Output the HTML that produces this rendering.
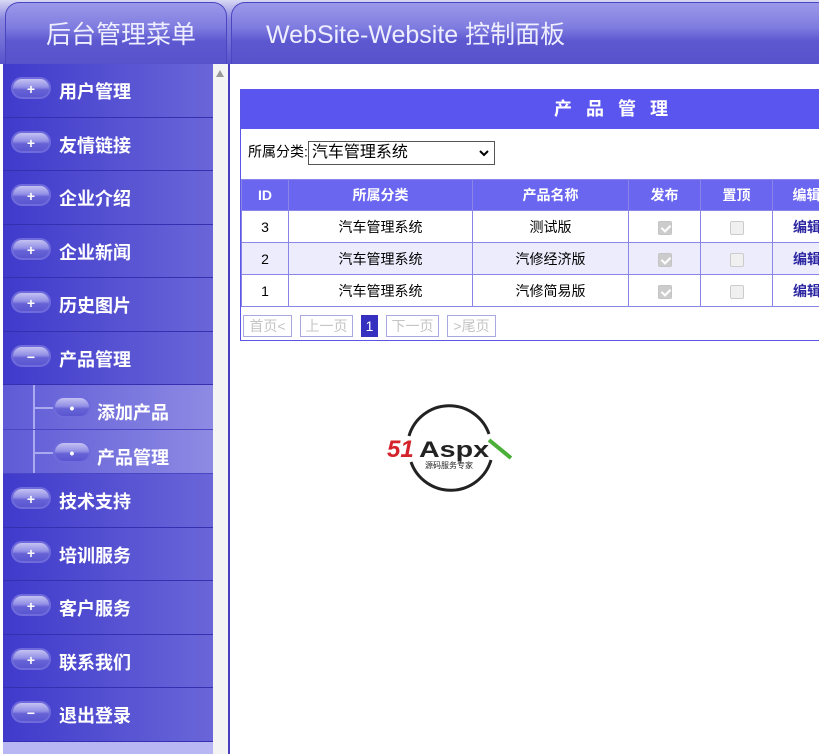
<!DOCTYPE html>
<html><head><meta charset="utf-8"><style>
*{margin:0;padding:0;box-sizing:border-box}
body{width:819px;height:754px;overflow:hidden;background:#fff;font-family:"Liberation Sans","Noto Sans CJK SC",sans-serif;position:relative}
.hdr{position:absolute;left:0;top:0;width:819px;height:64px;background:linear-gradient(#d8d8f4 0%,#8a87e0 30%,#5853cc 100%)}
.tab{position:absolute;top:2px;height:62px;border-radius:14px 14px 0 0;background:linear-gradient(#9c99ea 0%,#7f7ce0 40%,#5d58d0 62%,#5853cc 100%);border:1px solid #4a45c0;border-bottom:none}
.tab span{position:absolute;top:12px;color:#eef;font-size:25px}
.side{position:absolute;left:3px;top:64px;width:210px;height:690px;background:#5550d0}
.it{position:absolute;left:0;width:210px;background:linear-gradient(90deg,#3f3acb,#5d59d4 70%,#6a66d8);border-bottom:1px solid #3430b0}
.it b{position:absolute;left:56px;color:#fff;font-size:18px;font-weight:bold}
.pill{position:absolute;left:8px;width:40px;height:22px;border-radius:11px;background:linear-gradient(#c4c2f2,#9390e6 45%,#6662d6 60%,#5a56d0);border:2px solid #6f6bdc}
.pill i{position:absolute;left:0;right:0;top:3px;text-align:center;color:#fff;font-style:normal;font-size:14px;line-height:14px;font-weight:bold}
.sub{position:absolute;left:0;width:210px;background:linear-gradient(90deg,#5f5bd6,#7a77de 60%,#8e8be4);border-bottom:1px solid #4a46c4}
.sub b{position:absolute;left:94px;color:#fff;font-size:18px;font-weight:bold}
.sub .pill{left:50px;width:38px}
.vl{position:absolute;left:30px;top:0;width:2px;height:100%;background:#aaa8ee}
.hl{position:absolute;left:30px;width:20px;height:2px;background:#aaa8ee}
.sb{position:absolute;left:213px;top:64px;width:15px;height:690px;background:#f4f4f4}
.vline{position:absolute;left:228px;top:64px;width:2px;height:690px;background:#4a3fbf}
.tb{position:absolute;left:240px;top:89px;width:600px;height:252px;border:1px solid #5b55e8;font-size:14px}
.t1{height:39px;background:#5b55f0;color:#fff;font-weight:bold;font-size:18px;line-height:39px;letter-spacing:14px;position:relative}
.t1 span{position:absolute;left:313px}
.t2{height:50px;padding:12px 0 0 7px;font-size:14px}
.sel{display:inline-block;width:187px;height:24px;border:1px solid #555;font-size:16px;line-height:22px;padding-left:3px;vertical-align:middle;position:relative}
table{border-collapse:collapse;width:600px}
td,th{border:1px solid #8a86e8;text-align:center;height:32px;font-size:14px}
th{background:#6a66f0;color:#fff;height:31px}
tr.a td{background:#ececfc}
.cb{display:inline-block;width:14px;height:14px;border:1px solid #ccc;border-radius:2px;background:#f0f0f0;vertical-align:middle;position:relative}
.cb.c{background:#ccc;border-color:#c4c4c4}
.cb.c:after{content:"";position:absolute;left:4px;top:1px;width:4px;height:7px;border:solid #fff;border-width:0 2px 2px 0;transform:rotate(45deg)}
.ed{color:#2a24a0;font-weight:bold;text-align:left;padding-left:20px}
.pg{position:relative;height:34px;font-size:14px}
.pg span{position:absolute;top:8px;border:1px solid #aaa8e0;color:#c4c4c4;height:22px;line-height:20px;text-align:center}
</style></head><body>
<div class="hdr"></div>
<div class="tab" style="left:5px;width:222px"><span style="left:40px">后台管理菜单</span></div>
<div class="tab" style="left:231px;width:600px"><span style="left:34px">WebSite-Website 控制面板</span></div>
<div class="side">
<div class="it" style="top:0;height:54px"><div class="pill" style="top:13px"><i>+</i></div><b style="top:14px">用户管理</b></div>
<div class="it" style="top:54px;height:53px"><div class="pill" style="top:13px"><i>+</i></div><b style="top:14px">友情链接</b></div>
<div class="it" style="top:107px;height:54px"><div class="pill" style="top:13px"><i>+</i></div><b style="top:14px">企业介绍</b></div>
<div class="it" style="top:161px;height:53px"><div class="pill" style="top:13px"><i>+</i></div><b style="top:14px">企业新闻</b></div>
<div class="it" style="top:214px;height:54px"><div class="pill" style="top:13px"><i>+</i></div><b style="top:14px">历史图片</b></div>
<div class="it" style="top:268px;height:53px"><div class="pill" style="top:13px"><i>−</i></div><b style="top:14px">产品管理</b></div>
<div class="sub" style="top:321px;height:45px"><div class="vl"></div><div class="hl" style="top:22px"></div><div class="pill" style="top:11px"><i>•</i></div><b style="top:14px">添加产品</b></div>
<div class="sub" style="top:366px;height:44px"><div class="vl"></div><div class="hl" style="top:22px"></div><div class="pill" style="top:11px"><i>•</i></div><b style="top:14px">产品管理</b></div>
<div class="it" style="top:410px;height:54px"><div class="pill" style="top:13px"><i>+</i></div><b style="top:14px">技术支持</b></div>
<div class="it" style="top:464px;height:53px"><div class="pill" style="top:13px"><i>+</i></div><b style="top:14px">培训服务</b></div>
<div class="it" style="top:517px;height:54px"><div class="pill" style="top:13px"><i>+</i></div><b style="top:14px">客户服务</b></div>
<div class="it" style="top:571px;height:53px"><div class="pill" style="top:13px"><i>+</i></div><b style="top:14px">联系我们</b></div>
<div class="it" style="top:624px;height:54px"><div class="pill" style="top:13px"><i>−</i></div><b style="top:14px">退出登录</b></div>
<div style="position:absolute;top:678px;left:0;width:210px;height:12px;background:#b9b6f4"></div>
</div>
<div class="sb"><div style="margin:6px 0 0 3px;width:0;height:0;border-left:4px solid transparent;border-right:4px solid transparent;border-bottom:7px solid #999"></div></div>
<div class="vline"></div>
<div class="tb">
<div class="t1"><span>产品管理</span></div>
<div class="t2">所属分类:<span class="sel">汽车管理系统<svg style="position:absolute;right:5px;top:8px" width="10" height="7" viewBox="0 0 10 7"><path d="M1 1 L5 5 L9 1" fill="none" stroke="#000" stroke-width="2"/></svg></span></div>
<table>
<tr><th style="width:47px">ID</th><th style="width:184px">所属分类</th><th style="width:156px">产品名称</th><th style="width:72px">发布</th><th style="width:72px">置顶</th><th>编辑</th></tr>
<tr><td>3</td><td>汽车管理系统</td><td>测试版</td><td><span class="cb c"></span></td><td><span class="cb"></span></td><td class="ed">编辑</td></tr>
<tr class="a"><td>2</td><td>汽车管理系统</td><td>汽修经济版</td><td><span class="cb c"></span></td><td><span class="cb"></span></td><td class="ed">编辑</td></tr>
<tr><td>1</td><td>汽车管理系统</td><td>汽修简易版</td><td><span class="cb c"></span></td><td><span class="cb"></span></td><td class="ed">编辑</td></tr>
</table>
<div class="pg"><span style="left:2px;width:49px">首页&lt;</span><span style="left:59px;width:53px">上一页</span><span style="left:120px;width:17px;background:#3530c0;color:#fff;border-color:#3530c0">1</span><span style="left:145px;width:53px">下一页</span><span style="left:206px;width:49px">&gt;尾页</span></div>
</div>
<svg style="position:absolute;left:385px;top:400px" width="130" height="96" viewBox="0 0 130 96">
<path d="M24 36 A42 42 0 0 1 104 34" fill="none" stroke="#222" stroke-width="3"/>
<path d="M106 60 A42 42 0 0 1 26 62" fill="none" stroke="#222" stroke-width="3"/>
<text x="2" y="57" font-family="Liberation Sans" font-weight="bold" font-style="italic" font-size="24" fill="#d4232a">51</text>
<text x="34" y="57" font-family="Liberation Sans" font-weight="bold" font-size="22" fill="#222" textLength="70" lengthAdjust="spacingAndGlyphs">Aspx</text>
<path d="M104 40 L126 58" stroke="#4caf3a" stroke-width="4"/>
<text x="40" y="68" font-family="Noto Sans CJK SC" font-size="8" fill="#222">源码服务专家</text>
</svg>
</body></html>
